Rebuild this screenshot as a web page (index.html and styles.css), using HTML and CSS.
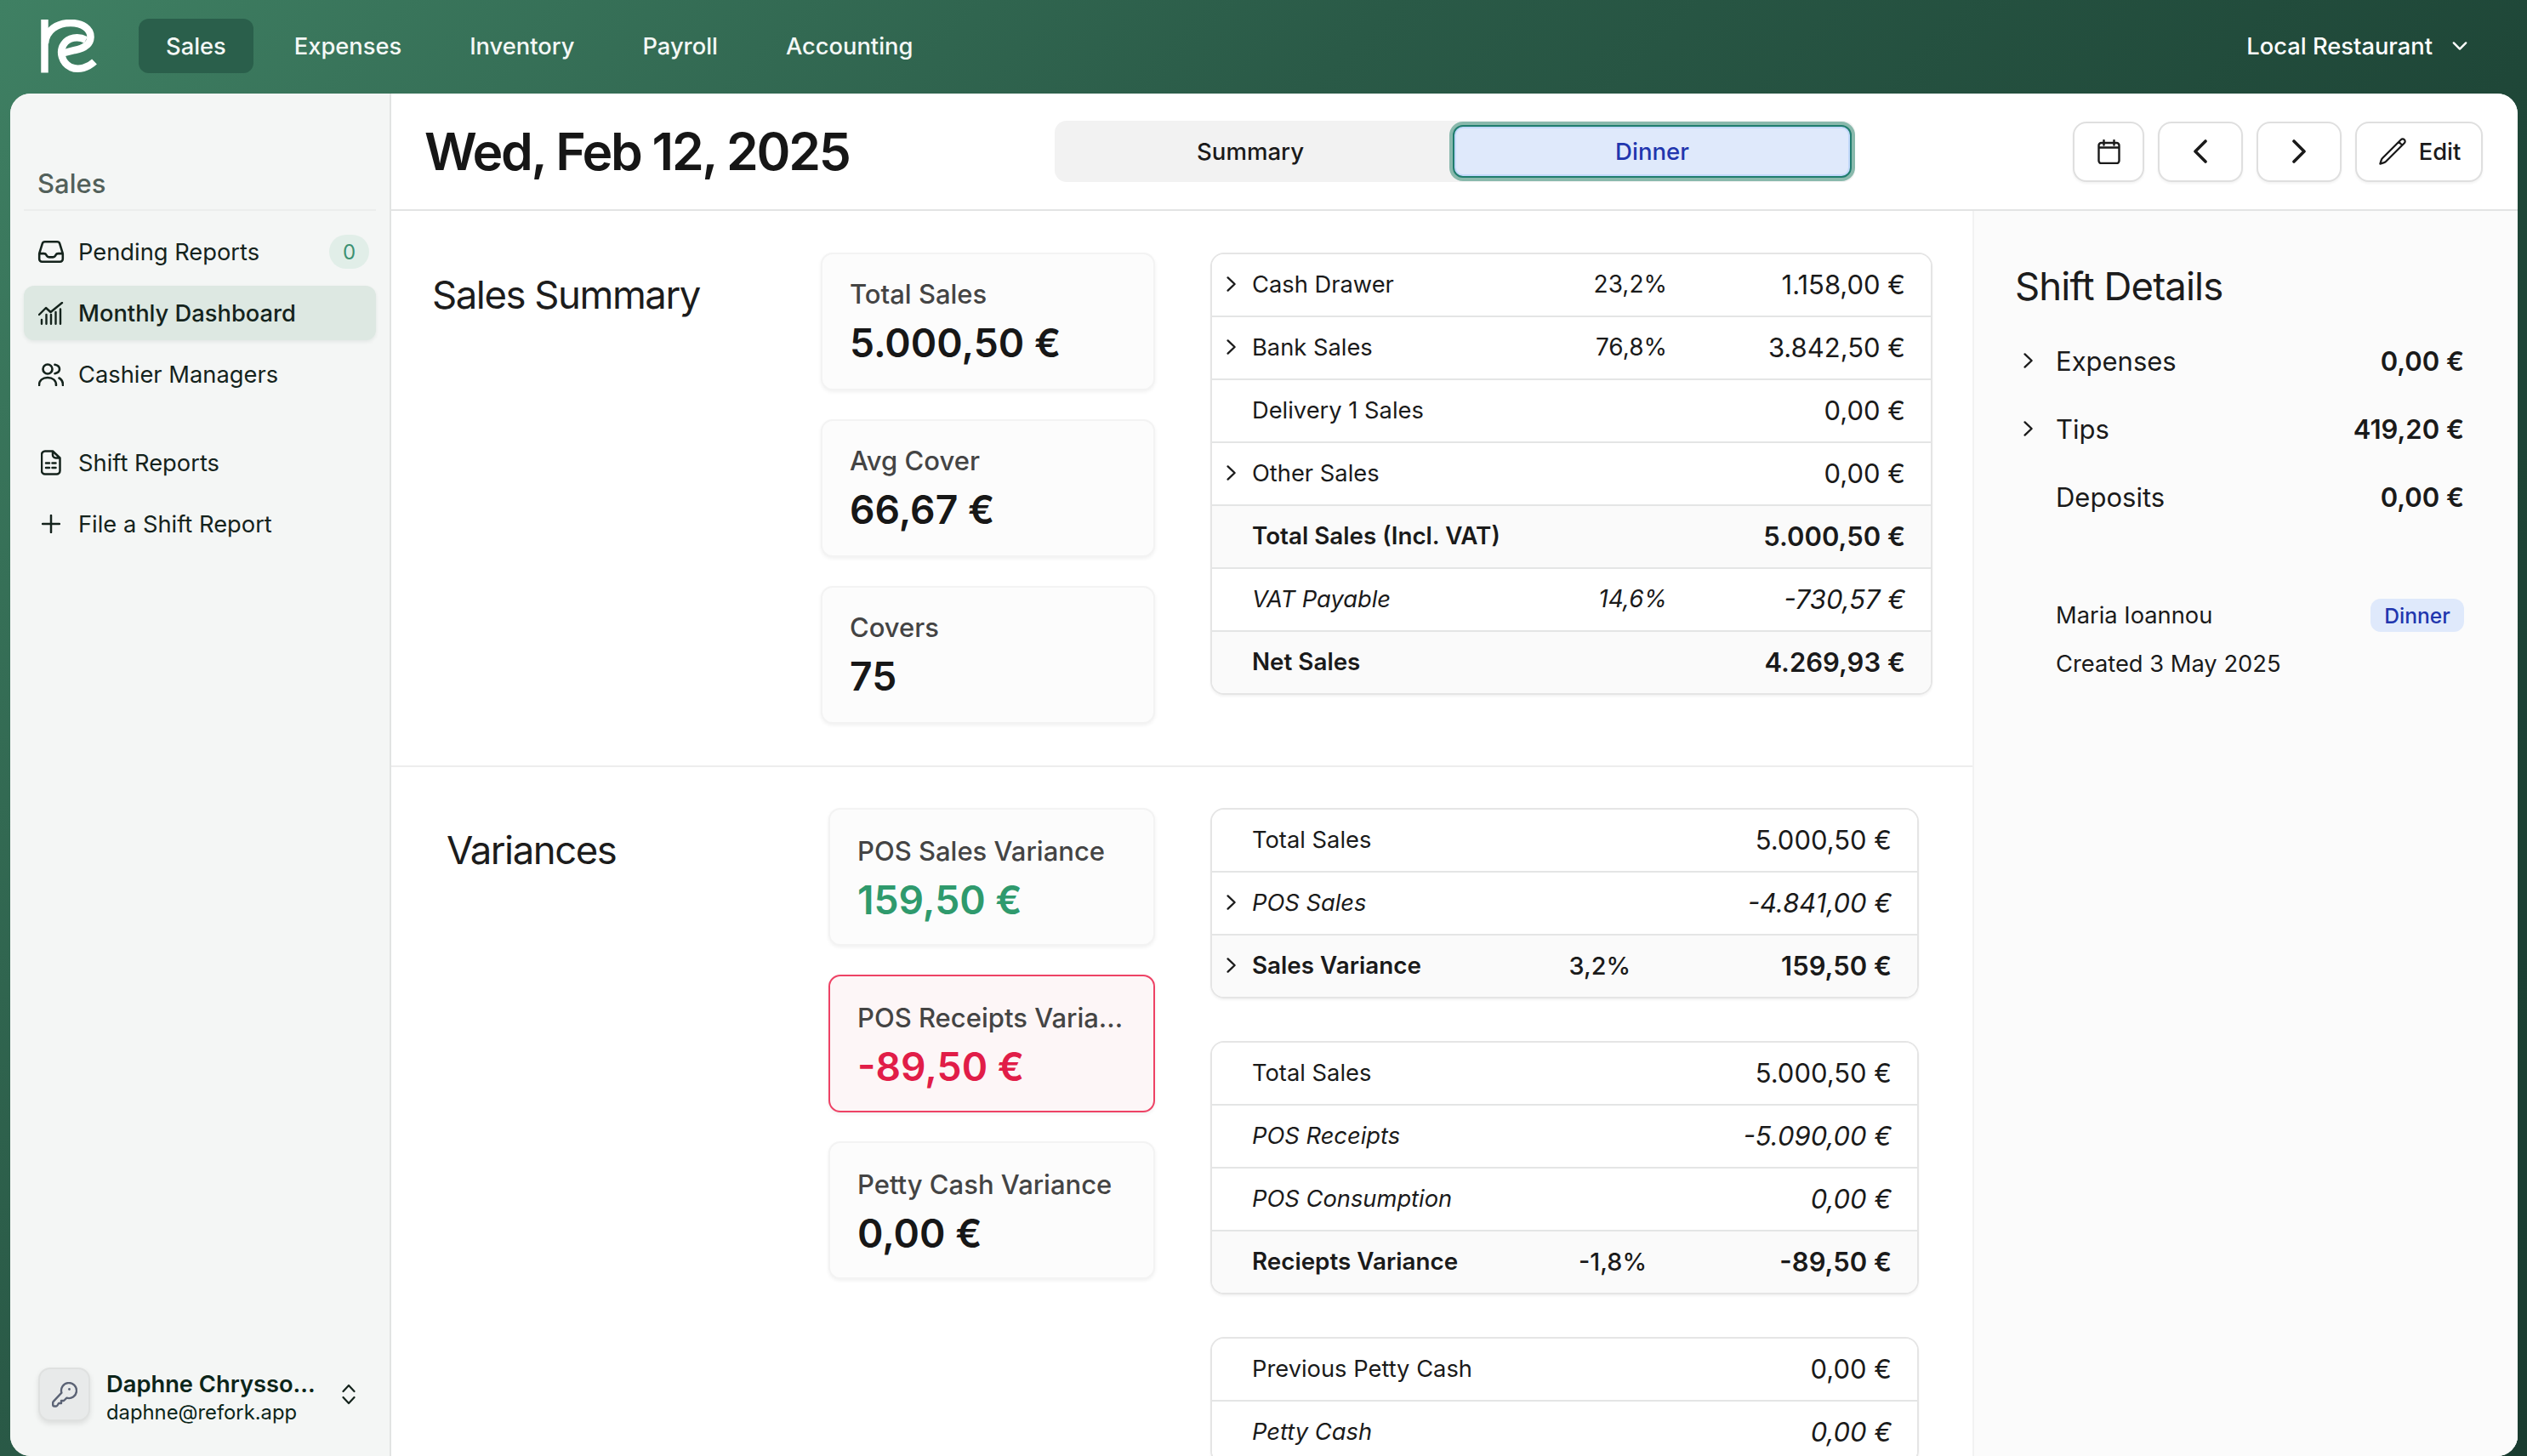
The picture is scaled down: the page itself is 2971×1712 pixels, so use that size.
FILE: index.html
```html
<!DOCTYPE html>
<html lang="en">
<head>
<meta charset="utf-8">
<title>Sales - Monthly Dashboard</title>
<link rel="stylesheet" href="styles.css">
</head>
<body>
<header class="topbar">
  <svg class="logo" viewBox="18 12 66 63" aria-hidden="true">
    <path d="M22.500 12V74.500" stroke-linecap="butt"/>
    <path d="M23 40C24 24 38 16 53 16C67 16 77 23 76.500 33C76 42 68 46 58 48L44 51.500"/>
    <path d="M71 36C62 31 50 33 45 41C39 50 43 63 53 68C63 72.500 74 68 81 61.500"/>
  </svg>
  <nav class="mainnav">
    <a class="mainnav-link is-active">Sales</a>
    <a class="mainnav-link">Expenses</a>
    <a class="mainnav-link">Inventory</a>
    <a class="mainnav-link">Payroll</a>
    <a class="mainnav-link">Accounting</a>
  </nav>
  <div class="venue">
    <span>Local Restaurant</span>
    <svg class="venue-chev" viewBox="0 0 16 10"><path d="M2 2l6 6 6-6"/></svg>
  </div>
</header>

<div class="panel">
  <aside class="sidebar">
    <div class="side-label">Sales</div>
    <ul class="side-list">
      <li class="side-item">
        <span class="side-icon"><svg class="ico ico-inbox" viewBox="0 0 24 24"><path d="M2.250 13.500h3.860a2.250 2.250 0 0 1 2.012 1.244l.256.512a2.250 2.250 0 0 0 2.013 1.244h3.218a2.250 2.250 0 0 0 2.013-1.244l.256-.512a2.250 2.250 0 0 1 2.013-1.244h3.859m-19.500.338V18a2.250 2.250 0 0 0 2.250 2.250h15A2.250 2.250 0 0 0 21.750 18v-4.162c0-.224-.034-.447-.1-.661L19.240 5.338a2.250 2.250 0 0 0-2.150-1.588H6.911a2.250 2.250 0 0 0-2.150 1.588L2.350 13.177a2.250 2.250 0 0 0-.1.661Z"/></svg></span>
        <span class="side-text">Pending Reports</span>
        <span class="side-badge">0</span>
      </li>
      <li class="side-item is-active">
        <span class="side-icon"><svg class="ico ico-chart" viewBox="0 0 30 27"><path d="M1 15L9 7L14.500 12L28 1M4 25.700V21M9.500 25.700V15M15 25.700V15M20.500 25.700V12M26 25.700V8.500"/></svg></span>
        <span class="side-text">Monthly Dashboard</span>
      </li>
      <li class="side-item">
        <span class="side-icon"><svg class="ico ico-users" viewBox="0 0 30 27"><circle cx="11" cy="7" r="5.500"/><path d="M19.500 1.800C23 2.500 25 4.500 25 7C25 9.500 23 11.500 19.500 12.200M1 26C1 20.500 5 17 11 17C17 17 21 20.500 21 26M24.500 17.500C27.500 19 29 22 29 26"/></svg></span>
        <span class="side-text">Cashier Managers</span>
      </li>
    </ul>
    <ul class="side-list side-list-second">
      <li class="side-item">
        <span class="side-icon"><svg class="ico ico-doc" viewBox="0 0 24 30"><path d="M5 1.500H14L22.500 9.500V24.500A4 4 0 0 1 18.500 28.500H5A4 4 0 0 1 1 24.500V5.500A4 4 0 0 1 5 1.500ZM14 1.500V6A3.500 3.500 0 0 0 17.500 9.500H22.500M6 15.500H10M13.500 15.500H17.500M6 21H10M13.500 21H17.500"/></svg></span>
        <span class="side-text">Shift Reports</span>
      </li>
      <li class="side-item">
        <span class="side-icon"><svg class="ico ico-plus" viewBox="0 0 22 22"><path d="M11 1V21M1 11H21"/></svg></span>
        <span class="side-text">File a Shift Report</span>
      </li>
    </ul>
    <div class="user">
      <div class="avatar"><svg class="ico ico-key" viewBox="0 0 30 30"><path d="M11.400 12.700A9 9 0 1 1 17.500 18.700L14 22H11V25H8L6.500 27.500A2 2 0 0 1 5 28.500H3A1.800 1.800 0 0 1 1.200 26.700V24.200A2 2 0 0 1 1.800 22.800Z"/><circle class="key-dot" cx="20.500" cy="8.500" r="1.400"/></svg></div>
      <div class="user-text">
        <div class="user-name">Daphne Chrysso...</div>
        <div class="user-mail">daphne@refork.app</div>
      </div>
      <svg class="ico ico-updown" viewBox="0 0 16 25"><path d="M1.500 9L8 2L14.500 9M1.500 16L8 23L14.500 16"/></svg>
    </div>
  </aside>

  <main class="main">
    <div class="pagehead">
      <h1 class="pagetitle">Wed, Feb 12, 2025</h1>
      <div class="tabs">
        <button class="tab">Summary</button>
        <button class="tab is-active">Dinner</button>
      </div>
      <div class="actions">
        <button class="btn btn-cal"><svg class="ico ico-cal" viewBox="0 0 27 29"><path d="M7.500 1V6.500M19.500 1V6.500M1.500 9.500H25.500M4.500 4H22.500A3 3 0 0 1 25.500 7V25A3 3 0 0 1 22.500 28H4.500A3 3 0 0 1 1.500 25V7A3 3 0 0 1 4.500 4Z"/></svg></button>
        <button class="btn btn-nav"><svg class="ico ico-nav" viewBox="0 0 16 28"><path d="M14 2L2 14L14 26"/></svg></button>
        <button class="btn btn-nav"><svg class="ico ico-nav" viewBox="0 0 16 28"><path d="M2 2L14 14L2 26"/></svg></button>
        <button class="btn btn-edit"><svg class="ico ico-pencil" viewBox="0 0 24 24"><path d="m16.862 4.487 1.687-1.688a1.875 1.875 0 1 1 2.652 2.652L6.832 19.820a4.500 4.500 0 0 1-1.897 1.130l-2.685.8.8-2.685a4.500 4.500 0 0 1 1.130-1.897L16.863 4.487Zm0 0L19.500 7.125"/></svg>Edit</button>
      </div>
    </div>

    <div class="body">
      <div class="content">
        <section class="section section-sales">
          <h2 class="section-title">Sales Summary</h2>
          <div class="cards">
            <div class="card"><div class="card-label">Total Sales</div><div class="card-value">5.000,50 €</div></div>
            <div class="card"><div class="card-label">Avg Cover</div><div class="card-value">66,67 €</div></div>
            <div class="card"><div class="card-label">Covers</div><div class="card-value">75</div></div>
          </div>
          <div class="tables">
            <div class="table table-sales">
              <div class="row"><span class="slot"><svg class="chev" viewBox="0 0 12 18"><path d="M1.600 1.400L9.600 9L1.600 16.600"/></svg></span><span class="label">Cash Drawer</span><span class="pct">23,2%</span><span class="val">1.158,00 €</span></div>
              <div class="row"><span class="slot"><svg class="chev" viewBox="0 0 12 18"><path d="M1.600 1.400L9.600 9L1.600 16.600"/></svg></span><span class="label">Bank Sales</span><span class="pct">76,8%</span><span class="val">3.842,50 €</span></div>
              <div class="row"><span class="slot"></span><span class="label">Delivery 1 Sales</span><span class="val">0,00 €</span></div>
              <div class="row"><span class="slot"><svg class="chev" viewBox="0 0 12 18"><path d="M1.600 1.400L9.600 9L1.600 16.600"/></svg></span><span class="label">Other Sales</span><span class="val">0,00 €</span></div>
              <div class="row row-total"><span class="slot"></span><span class="label">Total Sales (Incl. VAT)</span><span class="val">5.000,50 €</span></div>
              <div class="row row-sub"><span class="slot"></span><span class="label">VAT Payable</span><span class="pct">14,6%</span><span class="val">-730,57 €</span></div>
              <div class="row row-total"><span class="slot"></span><span class="label">Net Sales</span><span class="val">4.269,93 €</span></div>
            </div>
          </div>
        </section>

        <section class="section section-var">
          <h2 class="section-title">Variances</h2>
          <div class="cards">
            <div class="card"><div class="card-label">POS Sales Variance</div><div class="card-value is-good">159,50 €</div></div>
            <div class="card card-bad"><div class="card-label">POS Receipts Varia...</div><div class="card-value is-bad">-89,50 €</div></div>
            <div class="card"><div class="card-label">Petty Cash Variance</div><div class="card-value">0,00 €</div></div>
          </div>
          <div class="tables">
            <div class="table table-var1">
              <div class="row"><span class="slot"></span><span class="label">Total Sales</span><span class="val">5.000,50 €</span></div>
              <div class="row row-sub"><span class="slot"><svg class="chev" viewBox="0 0 12 18"><path d="M1.600 1.400L9.600 9L1.600 16.600"/></svg></span><span class="label">POS Sales</span><span class="val">-4.841,00 €</span></div>
              <div class="row row-total"><span class="slot"><svg class="chev" viewBox="0 0 12 18"><path d="M1.600 1.400L9.600 9L1.600 16.600"/></svg></span><span class="label">Sales Variance</span><span class="pct">3,2%</span><span class="val">159,50 €</span></div>
            </div>
            <div class="table table-var2">
              <div class="row"><span class="slot"></span><span class="label">Total Sales</span><span class="val">5.000,50 €</span></div>
              <div class="row row-sub"><span class="slot"></span><span class="label">POS Receipts</span><span class="val">-5.090,00 €</span></div>
              <div class="row row-sub"><span class="slot"></span><span class="label">POS Consumption</span><span class="val">0,00 €</span></div>
              <div class="row row-total"><span class="slot"></span><span class="label">Reciepts Variance</span><span class="pct">-1,8%</span><span class="val">-89,50 €</span></div>
            </div>
            <div class="table">
              <div class="row"><span class="slot"></span><span class="label">Previous Petty Cash</span><span class="val">0,00 €</span></div>
              <div class="row row-sub"><span class="slot"></span><span class="label">Petty Cash</span><span class="val">0,00 €</span></div>
            </div>
          </div>
        </section>
      </div>

      <aside class="details">
        <h2 class="details-title">Shift Details</h2>
        <div class="d-row"><span class="d-slot"><svg class="chev" viewBox="0 0 12 18"><path d="M1.600 1.400L9.600 9L1.600 16.600"/></svg></span><span class="d-label">Expenses</span><span class="d-val">0,00 €</span></div>
        <div class="d-row"><span class="d-slot"><svg class="chev" viewBox="0 0 12 18"><path d="M1.600 1.400L9.600 9L1.600 16.600"/></svg></span><span class="d-label">Tips</span><span class="d-val">419,20 €</span></div>
        <div class="d-row"><span class="d-slot"></span><span class="d-label">Deposits</span><span class="d-val">0,00 €</span></div>
        <div class="meta">
          <div class="meta-row"><span>Maria Ioannou</span><span class="pill">Dinner</span></div>
          <div class="meta-date">Created 3 May 2025</div>
        </div>
      </aside>
    </div>
  </main>
</div>
</body>
</html>
```
FILE: styles.css
```css
* { box-sizing: border-box; }
html, body { margin: 0; height: 100%; }
body {
  width: 2971px;
  height: 1712px;
  overflow: hidden;
  font-family: Inter, "Liberation Sans", sans-serif;
  font-size: 27.300px;
  color: #1a1a1a;
  background: linear-gradient(135deg, #3f8063 0%, #2a5a47 35%, #1f4738 65%, #1a3c30 100%);
  display: flex;
  flex-direction: column;
}
button { font: inherit; color: inherit; background: none; border: 0; padding: 0; margin: 0; }
ul { list-style: none; margin: 0; padding: 0; }
h1, h2 { margin: 0; }

/* Top bar */
.topbar {
  flex: 0 0 110px;
  display: flex;
  align-items: center;
  padding: 0 32px 2px 48px;
  color: #fff;
}
.logo {
  width: 66px;
  height: 63px;
  margin-right: 49px;
  fill: none;
  stroke: #fff;
  stroke-width: 8.500;
}
.mainnav { display: flex; gap: 16px; }
.mainnav-link {
  height: 64px;
  padding: 0 32px;
  display: flex;
  align-items: center;
  border-radius: 12px;
  font-weight: 500;
  color: #f4f8f6;
}
.mainnav-link.is-active { background: #2a5f4b; }
.venue {
  margin-left: auto;
  margin-right: 37px;
  display: flex;
  align-items: center;
  gap: 22px;
  font-weight: 500;
}
.venue-chev { width: 20px; height: 12px; fill: none; stroke: #fff; stroke-width: 2; stroke-linecap: round; stroke-linejoin: round; }

/* Panel */
.panel {
  flex: 1;
  min-height: 0;
  margin: 0 11px 0 12px;
  display: flex;
  background: #fff;
  border-radius: 24px;
  overflow: hidden;
}

/* Icons */
.ico { fill: none; stroke: #14231c; stroke-width: 1.700; stroke-linecap: round; stroke-linejoin: round; display: block; }
.ico-inbox { width: 34px; height: 34px; stroke-width: 1.800; }
.ico-chart { width: 30px; height: 27px; stroke-width: 2.400; }
.ico-users { width: 30px; height: 27px; stroke-width: 2.600; }
.ico-doc { width: 24px; height: 30px; stroke-width: 2.500; }
.ico-plus { width: 22px; height: 22px; stroke-width: 2.500; }
.ico-key { width: 30px; height: 30px; stroke: #5b6375; stroke-width: 2.400; }
.key-dot { fill: #5b6375; stroke: none; }
.ico-updown { width: 16px; height: 25px; stroke: #14231c; stroke-width: 2.200; flex: none; }
.ico-cal { width: 27px; height: 29px; stroke: #1a1a1a; stroke-width: 2.400; }
.ico-nav { width: 16px; height: 28px; stroke: #1a1a1a; stroke-width: 3.600; }
.ico-pencil { width: 36px; height: 36px; stroke: #1a1a1a; stroke-width: 1.500; }
.chev { width: 12px; height: 18px; fill: none; stroke: #1a1a1a; stroke-width: 2.300; stroke-linecap: round; stroke-linejoin: round; display: block; }

/* Sidebar */
.sidebar {
  flex: 0 0 448px;
  display: flex;
  flex-direction: column;
  background: #f4f6f5;
  border-right: 2px solid #e2e4e3;
  padding: 88px 16px 41px;
}
.side-label {
  font-size: 31px;
  line-height: 36px;
  font-weight: 500;
  color: #52605a;
  padding: 0 16px 12px;
  border-bottom: 2px solid #eceeed;
  margin-bottom: 16px;
}
.side-list { display: flex; flex-direction: column; gap: 8px; }
.side-list-second { margin-top: 40px; }
.side-item {
  height: 64px;
  display: flex;
  align-items: center;
  padding: 0 8px 0 13px;
  gap: 13px;
  border-radius: 12px;
  color: #14231c;
}
.side-item.is-active {
  background: #dde8e2;
  font-weight: 500;
  box-shadow: 0 2px 4px rgba(30, 60, 45, .08);
}
.side-icon { flex: 0 0 38px; display: flex; justify-content: center; }
.side-text { flex: 1; white-space: nowrap; }
.side-badge {
  flex: 0 0 47px;
  height: 40px;
  border-radius: 20px;
  background: #e1eee8;
  color: #3d9172;
  font-size: 24px;
  display: flex;
  align-items: center;
  justify-content: center;
}
.user { margin-top: auto; height: 63px; display: flex; align-items: center; padding-left: 17px; }
.avatar {
  flex: 0 0 61px;
  height: 63px;
  border: 2px solid #dfe1e0;
  border-radius: 14px;
  background: #e8eaea;
  box-shadow: 0 3px 6px rgba(0, 0, 0, .1);
  display: flex;
  align-items: center;
  justify-content: center;
  margin-right: 19px;
}
.user-text { flex: 0 0 277px; color: #0c2519; margin-top: 9px; }
.user-name { font-weight: 600; line-height: 33px; white-space: nowrap; }
.user-mail { font-size: 23.800px; line-height: 33px; white-space: nowrap; }

/* Main */
.main { flex: 1; min-width: 0; display: flex; flex-direction: column; background: #fff; }
.pagehead {
  flex: 0 0 138px;
  display: flex;
  align-items: center;
  padding: 0 41px 0 39px;
  border-bottom: 2px solid #e3e4e4;
}
.pagetitle {
  flex: 0 0 741px;
  font-size: 60.600px;
  font-weight: 600;
  letter-spacing: -0.038em;
  color: #161616;
  white-space: nowrap;
}
.tabs {
  display: grid;
  grid-template-columns: 460px 469px;
  gap: 8px;
  width: 941px;
  height: 72px;
  padding: 5px 4px 5px 0;
  background: #f2f2f2;
  border-radius: 14px;
  font-size: 27.600px;
}
.tab { font-weight: 500; border-radius: 12px; }
.tab.is-active {
  background: #dfe9fb;
  color: #2136ae;
  border: 2.500px solid #1f7d6f;
  box-shadow: 0 0 0 4px #89b9ac, inset 0 0 0 2px #c3d9fb;
}
.actions { margin-left: auto; display: flex; gap: 16px; }
.btn {
  height: 71px;
  display: flex;
  align-items: center;
  justify-content: center;
  border: 2px solid #dfdfdf;
  border-radius: 16px;
  background: #fff;
  box-shadow: 0 2px 3px rgba(0, 0, 0, .05);
  font-weight: 500;
}
.btn-cal { width: 84px; }
.btn-nav { width: 100px; }
.btn-edit { width: 150px; gap: 13px; }

.body { flex: 1; min-height: 0; display: flex; }
.content { flex: 0 0 1861px; border-right: 2px solid #f2f2f2; overflow: hidden; }

.section { display: flex; align-items: flex-start; }
.section-sales {
  padding: 49px 47px 49px 48px;
  border-bottom: 2px solid #ededed;
}
.section-var { padding: 48px 63px 0 65px; }
.section-title {
  font-size: 45.500px;
  font-weight: 400;
  line-height: 54px;
  letter-spacing: -0.032em;
  color: #1c1c1c;
  padding-top: 23px;
  white-space: nowrap;
}
.section-sales .section-title { flex: 0 0 457px; }
.section-var .section-title { flex: 0 0 449px; }
.cards { display: flex; flex-direction: column; gap: 34px; margin-right: 65px; }
.section-sales .cards { flex: 0 0 393px; }
.section-var .cards { flex: 0 0 384px; }
.card {
  height: 162px;
  padding: 25px 20px 0 32px;
  border: 2px solid #f3f3f3;
  border-radius: 14px;
  background: #fcfcfc;
  box-shadow: 0 2px 4px rgba(0, 0, 0, .06);
}
.section-var .card { padding-top: 27px; }
.card-bad { border-color: #ee4265; background: #fdf6f7; }
.card-label { font-size: 31px; line-height: 44px; font-weight: 500; color: #444; white-space: nowrap; }
.card-value { font-size: 46.200px; line-height: 54px; font-weight: 600; margin-top: 8px; color: #171717; white-space: nowrap; }
.card-value.is-good { color: #2f9a6d; }
.card-value.is-bad { color: #e11d48; }

.tables { flex: 1; display: flex; flex-direction: column; gap: 50px; min-width: 0; }
.table {
  border: 2px solid #e5e5e5;
  border-radius: 16px;
  overflow: hidden;
  box-shadow: 0 2px 3px rgba(0, 0, 0, .05);
}
.row {
  height: 74px;
  display: flex;
  align-items: center;
  padding: 0 30px 2px 0;
  border-top: 2px solid #e4e5e5;
  background: #fff;
}
.row:first-child { height: 72px; border-top: 0; }
.row-total { background: #fafafa; font-weight: 600; }
.row-total .label { font-size: 27.800px; }
.row-sub { font-style: italic; }
.slot { flex: 0 0 47px; display: flex; justify-content: center; padding-right: 2px; }
.label { flex: 1; white-space: nowrap; }
.pct { font-size: 28px; white-space: nowrap; }
.row-total .pct { font-size: 28.800px; font-weight: 500; }
.val { flex: 0 0 auto; width: 280px; text-align: right; font-size: 31px; white-space: nowrap; }
.table-var1 .val { width: 307px; }
.table-var2 .val { width: 288px; }

/* Details */
.details { flex: 1; min-width: 0; background: #fbfbfb; padding: 62px 63px 0 48px; }
.details-title { font-size: 45.500px; font-weight: 400; line-height: 54px; letter-spacing: -0.02em; margin-bottom: 21px; color: #1c1c1c; white-space: nowrap; }
.d-row { height: 80px; display: flex; align-items: center; font-size: 31px; padding-bottom: 2px; }
.d-slot { flex: 0 0 48px; display: flex; padding-left: 10px; }
.d-label { flex: 1; }
.d-val { font-weight: 600; }
.meta { margin-top: 79px; padding-left: 48px; }
.meta-row { display: flex; justify-content: space-between; align-items: center; height: 39px; }
.pill {
  height: 39px;
  width: 110px;
  display: flex;
  align-items: center;
  justify-content: center;
  border-radius: 12px;
  background: #dfe9fb;
  color: #2136ae;
  font-size: 24.600px;
  font-weight: 500;
}
.meta-date { margin-top: 18px; line-height: 40px; }
```
